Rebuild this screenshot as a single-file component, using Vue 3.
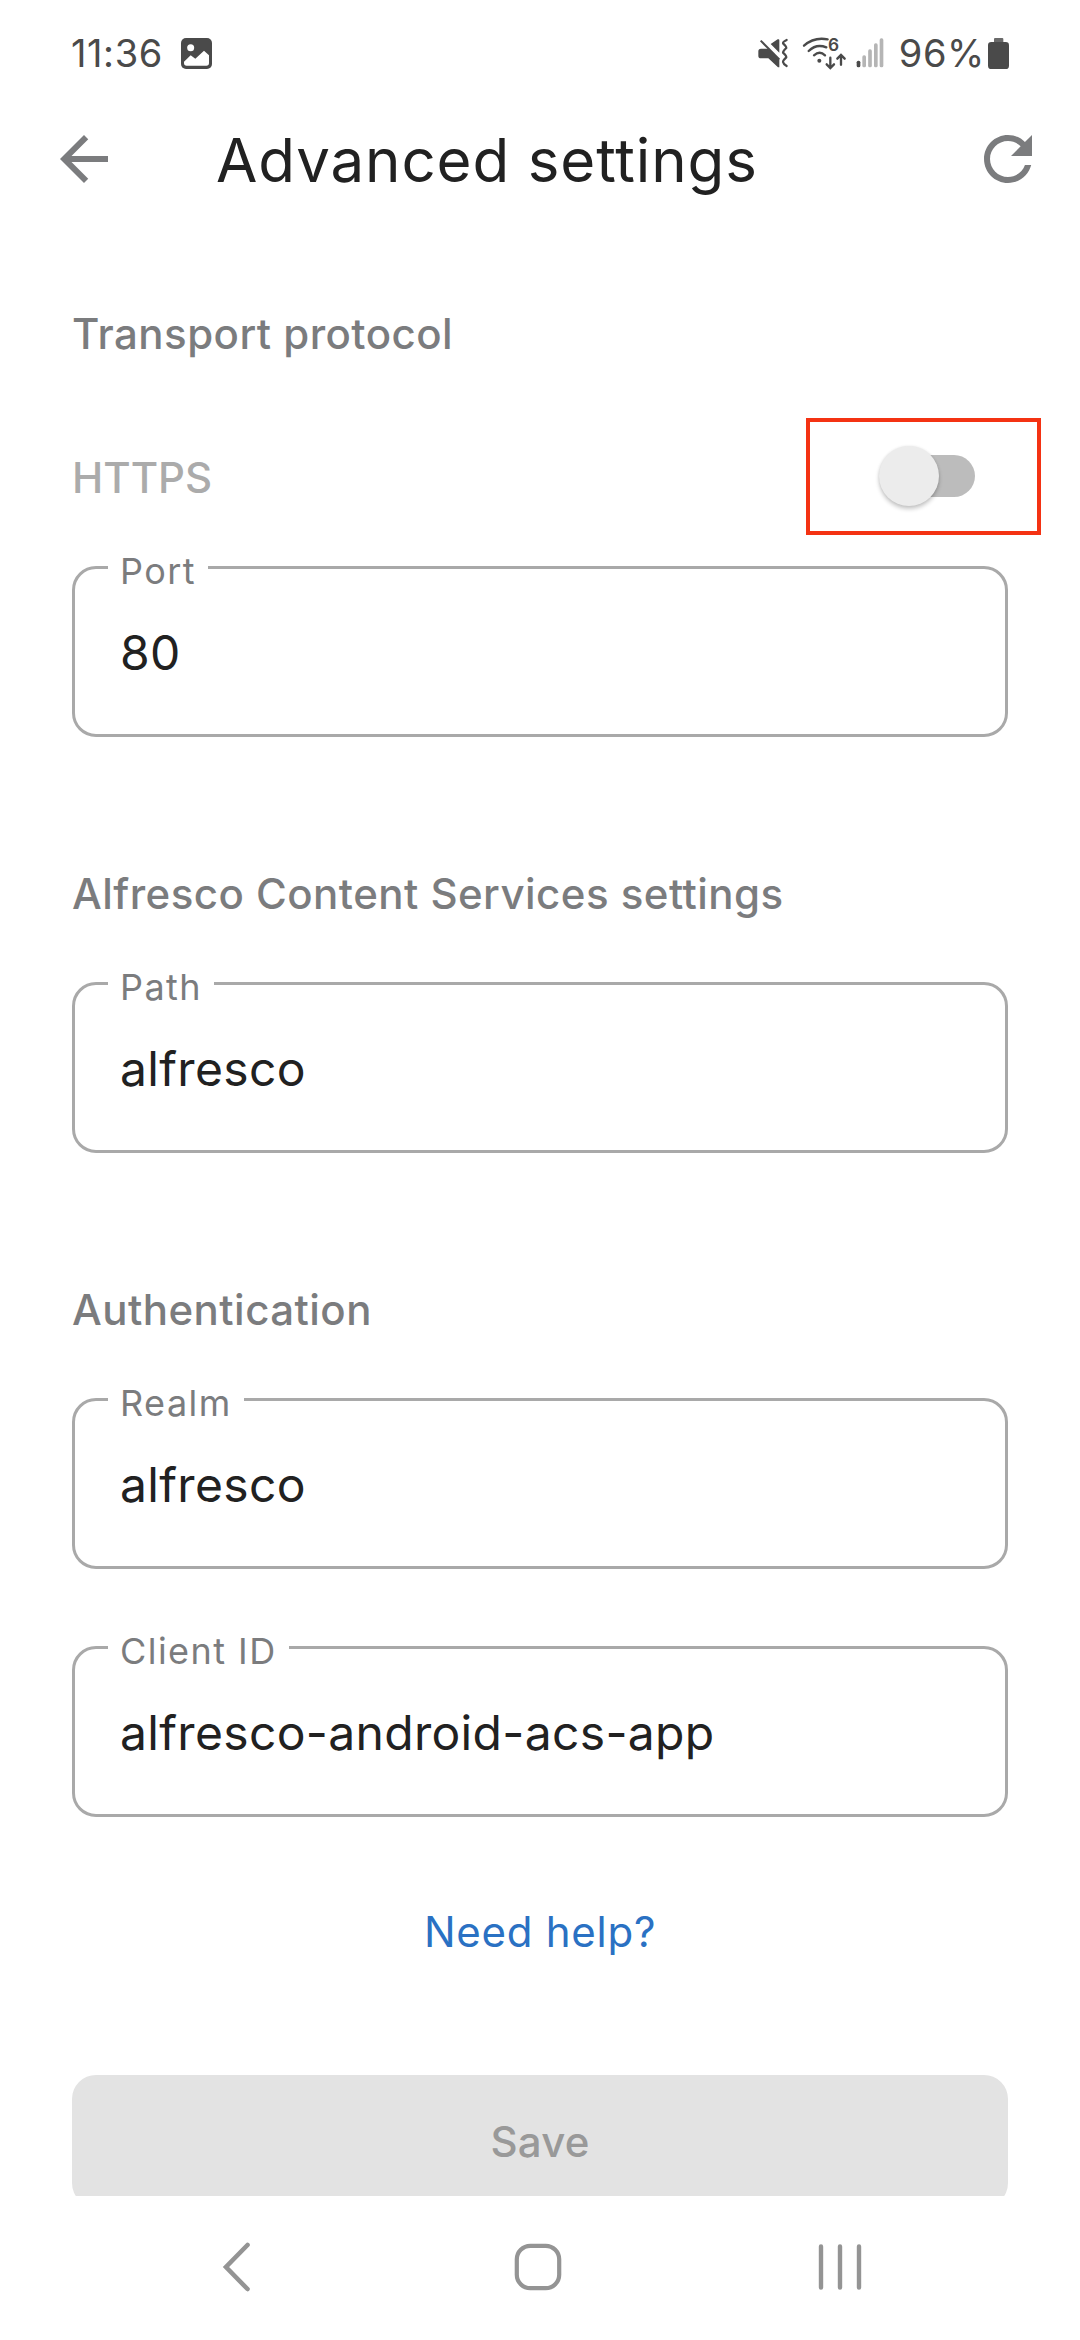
<script setup>
import { ref } from 'vue'

const https = ref(false)

const sections = [
  { title: 'Transport protocol', toggle: true, fields: [{ label: 'Port', value: '80' }] },
  { title: 'Alfresco Content Services settings', fields: [{ label: 'Path', value: 'alfresco' }] },
  {
    title: 'Authentication',
    fields: [
      { label: 'Realm', value: 'alfresco' },
      { label: 'Client ID', value: 'alfresco-android-acs-app' }
    ]
  }
]
</script>

<template>
  <div class="screen">
    <div class="status">
      <span class="status-text">11:36</span>
      <svg class="picture" width="31" height="31" viewBox="0 0 93 93">
        <rect width="93" height="93" rx="15" fill="#4a4a4a" />
        <circle cx="29" cy="29" r="10.5" fill="#fff" />
        <path d="M9 71 L29 52 L43 62 L69 38 L84 52 V75 Q84 83 76 83 H17 Q9 83 9 75 Z" fill="#fff" />
      </svg>
      <div class="status-right">
        <svg class="mute" width="32" height="32" viewBox="50 80 96 96">
          <path d="M61 91 L117 147" stroke="#4a4a4a" stroke-width="6" fill="none" />
          <path d="M62 115 H84 L117 147 V171 H113 L84 144 H62 Q54 144 54 136 V123 Q54 115 62 115 Z M91 101 L112 87 Q117 85 117 90 V127 Z" fill="#4a4a4a" />
          <path d="M139 89 Q127 95 128 99 Q138 108 138 113 Q128 122 128 127 Q138 136 138 141 Q128 150 128 155 Q129 161 139 167" fill="none" stroke="#4a4a4a" stroke-width="6.5" stroke-linejoin="round" stroke-linecap="round" />
        </svg>
        <svg class="wifi" width="45" height="42" viewBox="185 66 135 126">
          <g fill="none" stroke="#4a4a4a" stroke-width="7" stroke-linecap="round">
            <path d="M191 107 Q221 80 262 88" />
            <path d="M205 123 Q228 100 258 112" />
            <path d="M221 136 Q238 121 254 136" />
            <path d="M270 143 V172 M259 163 L270 174 L281 163" />
            <path d="M302 164 V136 M291 146 L302 135 L313 146" />
          </g>
          <circle cx="237" cy="152" r="6" fill="#4a4a4a" />
          <text x="263" y="122" class="wifi-gen">6</text>
        </svg>
        <svg class="signal" width="30" height="32" viewBox="340 80 90 96">
          <rect x="345" y="151" width="11" height="20" rx="5" fill="#4a4a4a" />
          <g fill="#b5b5b5">
            <rect x="362" y="135" width="11" height="36" rx="5" />
            <rect x="379.500" y="117" width="11" height="54" rx="5" />
            <rect x="397" y="99" width="11" height="72" rx="5" />
            <rect x="414" y="84" width="11" height="87" rx="5" />
          </g>
        </svg>
        <span class="status-text">96%</span>
        <svg class="battery" width="21" height="31" viewBox="0 0 63 93">
          <path d="M18 14 V3 Q18 0 21 0 H43 Q46 0 46 3 V14 Z" fill="#6a6a6a" />
          <rect y="12" width="63" height="81" rx="10" fill="#4a4a4a" />
        </svg>
      </div>
    </div>

    <header class="appbar">
      <svg width="72" height="72" viewBox="0 0 24 24" fill="#7b7c7e">
        <path d="M20 11H7.830l5.590-5.590L12 4l-8 8 8 8 1.410-1.410L7.830 13H20v-2z" />
      </svg>
      <h1>Advanced settings</h1>
      <svg width="72" height="72" viewBox="0 0 24 24" fill="#7b7c7e">
        <path d="M17.650 6.350C16.200 4.900 14.210 4 12 4c-4.420 0-7.990 3.580-7.990 8s3.570 8 7.990 8c3.730 0 6.840-2.550 7.730-6h-2.080c-.82 2.330-3.040 4-5.650 4-3.310 0-6-2.690-6-6s2.690-6 6-6c1.660 0 3.140.69 4.220 1.780L13 11h7V4l-2.350 2.350z" />
      </svg>
    </header>

    <main>
      <section v-for="s in sections" :key="s.title">
        <h2>{{ s.title }}</h2>
        <div v-if="s.toggle" class="toggle-row">
          <span class="toggle-label">HTTPS</span>
          <div class="highlight">
            <button class="switch" role="switch" :aria-checked="https" aria-label="HTTPS" @click="https = !https">
              <span class="thumb" :class="{ on: https }"></span>
            </button>
          </div>
        </div>
        <div v-for="f in s.fields" :key="f.label" class="field">
          <span class="label">{{ f.label }}</span>
          <span class="value">{{ f.value }}</span>
        </div>
      </section>
      <a class="help">Need help?</a>
      <button class="save" disabled>Save</button>
    </main>

    <nav>
      <svg width="30" height="50" viewBox="0 0 30 50">
        <path d="M25.500 3 L4 25 L25.500 47" fill="none" stroke="#949494" stroke-width="4.600" stroke-linecap="round" />
      </svg>
      <svg class="home" width="48" height="48" viewBox="0 0 48 48">
        <rect x="2.800" y="2.800" width="42.400" height="42.400" rx="13.500" fill="none" stroke="#949494" stroke-width="4.200" />
      </svg>
      <svg width="46" height="48" viewBox="0 0 46 48">
        <path d="M4 3.500 V44.500 M23 3.500 V44.500 M42 3.500 V44.500" stroke="#949494" stroke-width="4.400" stroke-linecap="round" />
      </svg>
    </nav>
  </div>
</template>

<style>
body { background: #fff; }
</style>

<style scoped>
.screen {
  width: 1080px;
  height: 2340px;
  display: flex;
  flex-direction: column;
  overflow: hidden;
  background: #fff;
  color: #212121;
  font-family: Inter, Roboto, sans-serif;
}
svg { display: block; flex: none; }

.status {
  height: 106px;
  flex: none;
  box-sizing: border-box;
  padding: 0 71px;
  display: flex;
  align-items: center;
}
.status-text {
  font-size: 38px;
  line-height: 46px;
  letter-spacing: 0.6px;
  color: #4a4a4a;
}
.picture { margin-left: 18px; }
.status-right { margin-left: auto; display: flex; align-items: center; }
.wifi { margin-left: 13px; overflow: visible; }
.signal { margin: 0 14px 0 8px; }
.battery { margin-left: 3px; }
.wifi-gen { font-size: 52px; font-weight: 600; fill: #4a4a4a; }

.appbar {
  height: 106px;
  flex: none;
  box-sizing: border-box;
  padding: 0 36px 0 48px;
  display: flex;
  align-items: center;
}
h1 {
  flex: 1;
  margin: 2px 0 0 96px;
  font-size: 60px;
  font-weight: 400;
  line-height: 72px;
  letter-spacing: 0.88px;
}

main {
  height: 1984px;
  flex: none;
  box-sizing: border-box;
  overflow: hidden;
  padding: 96px 72px 0;
  display: flex;
  flex-direction: column;
}
section { margin-bottom: 131px; }
section:last-of-type { margin-bottom: 89px; }
h2 {
  margin: 0 0 63px;
  font-size: 42px;
  font-weight: 500;
  line-height: 51px;
  letter-spacing: 0.46px;
  color: #7b7c7e;
}
.toggle-row {
  margin: -4px -33px 31px 0;
  height: 117px;
  display: flex;
  align-items: center;
  justify-content: space-between;
}
.toggle-label {
  padding-top: 2px;
  font-size: 42px;
  font-weight: 500;
  line-height: 51px;
  color: #ababab;
}
.highlight {
  width: 235px;
  height: 117px;
  box-sizing: border-box;
  border: 4px solid #f43213;
  padding: 0 0 1px 72px;
  display: flex;
  align-items: center;
}
.switch {
  position: relative;
  width: 93px;
  height: 42px;
  padding: 0;
  border: 0;
  border-radius: 21px;
  background: #bcbcbc;
}
.thumb {
  position: absolute;
  left: -3px;
  top: -9px;
  width: 60px;
  height: 60px;
  border-radius: 50%;
  background: #ececec;
  box-shadow: 0 3px 4px rgba(0, 0, 0, 0.22), 0 0 3px rgba(0, 0, 0, 0.08);
}
.thumb.on { left: 36px; }

.field {
  position: relative;
  box-sizing: border-box;
  height: 171px;
  border: 3px solid #a9a9a9;
  border-radius: 24px;
  padding: 54px 45px 0;
}
.field + .field { margin-top: 77px; }
.label {
  position: absolute;
  left: 33px;
  top: -20px;
  padding: 0 12px;
  background: #fff;
  font-size: 36px;
  line-height: 44px;
  letter-spacing: 1.45px;
  color: #7b7c7e;
}
.value {
  display: block;
  font-size: 48px;
  line-height: 59px;
  letter-spacing: 0.33px;
}
.help {
  align-self: center;
  font-size: 42px;
  line-height: 51px;
  letter-spacing: 0.74px;
  color: #2a71c3;
}
.save {
  flex: none;
  margin-top: 118px;
  height: 132px;
  padding: 0;
  border: 0;
  border-radius: 24px;
  background: #e3e3e3;
  color: #999;
  font-family: inherit;
  font-size: 42px;
  font-weight: 500;
  line-height: 51px;
  letter-spacing: 0.2px;
}

nav {
  height: 144px;
  box-sizing: border-box;
  padding: 0 217px 2px 222px;
  display: flex;
  align-items: center;
  justify-content: space-between;
}
.home { margin-left: 7px; }
</style>
